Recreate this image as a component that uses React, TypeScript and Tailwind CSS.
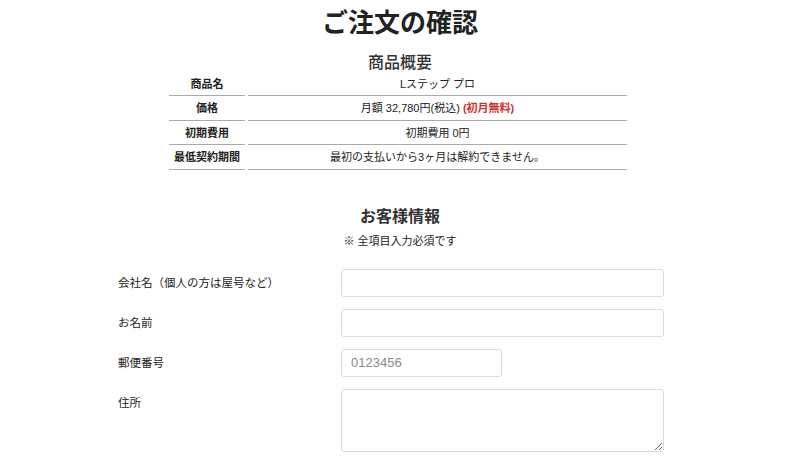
import React from "react";

const font = { fontFamily: '"Liberation Sans", "Noto Sans CJK JP", sans-serif' };

const rows: { th: string; td: React.ReactNode }[] = [
  { th: "商品名", td: "Lステップ プロ" },
  {
    th: "価格",
    td: (
      <span>
        月額 32,780円(税込) <span className="font-bold text-[#d0312d]">(初月無料)</span>
      </span>
    ),
  },
  { th: "初期費用", td: "初期費用 0円" },
  { th: "最低契約期間", td: "最初の支払いから3ヶ月は解約できません。" },
];

export default function App() {
  return (
    <div className="min-h-[468px] w-full bg-white text-[#333]" style={font}>
      <div className="pt-[8px]">
        <h1 className="text-center text-[26px] font-bold leading-[31px] text-[#222]">ご注文の確認</h1>
        <h2 className="mt-[14px] text-center text-[16px] font-medium leading-[20px] text-[#333]">商品概要</h2>
        <div className="flex justify-center pr-[4px]">
          <div className="grid w-[458px] grid-cols-[76px_379px] gap-x-[3px] gap-y-[1.5px]">
            {rows.map((r) => (
              <React.Fragment key={r.th}>
                <div className="flex h-[23px] items-center justify-center border-b border-[#aaa] text-[11px] font-bold text-[#222]">
                  {r.th}
                </div>
                <div className="flex h-[23px] items-center justify-center border-b border-[#aaa] text-[11px] text-[#222]">
                  {r.td}
                </div>
              </React.Fragment>
            ))}
          </div>
        </div>

        <h2 className="mt-[37px] text-center text-[16px] font-bold leading-[20px] text-[#333]">お客様情報</h2>
        <p className="mt-[6px] text-center text-[11px] leading-[16px] text-[#222]">※ 全項目入力必須です</p>

        <div className="mx-auto mt-[20px] w-[600px] pl-[18px]">
          <div className="grid grid-cols-[223px_323px] gap-y-[12px]">
            <label className="text-[11.5px] leading-[28px] text-[#222]">会社名（個人の方は屋号など）</label>
            <input
              type="text"
              className="h-[28px] w-full rounded-[3px] border border-[#dcdcdc] bg-white px-[9px] text-[13px] outline-none"
            />
            <label className="text-[11.5px] leading-[28px] text-[#222]">お名前</label>
            <input
              type="text"
              className="h-[28px] w-full rounded-[3px] border border-[#dcdcdc] bg-white px-[9px] text-[13px] outline-none"
            />
            <label className="text-[11.5px] leading-[28px] text-[#222]">郵便番号</label>
            <div>
              <input
                type="text"
                placeholder="0123456"
                className="h-[28px] w-[161px] rounded-[3px] border border-[#dcdcdc] bg-white px-[9px] text-[13px] outline-none placeholder:text-[#888]"
              />
            </div>
            <label className="text-[11.5px] leading-[28px] text-[#222]">住所</label>
            <textarea className="block h-[63px] w-full rounded-[3px] border border-[#dcdcdc] bg-white px-[9px] text-[13px] outline-none" />
          </div>
        </div>
      </div>
    </div>
  );
}
